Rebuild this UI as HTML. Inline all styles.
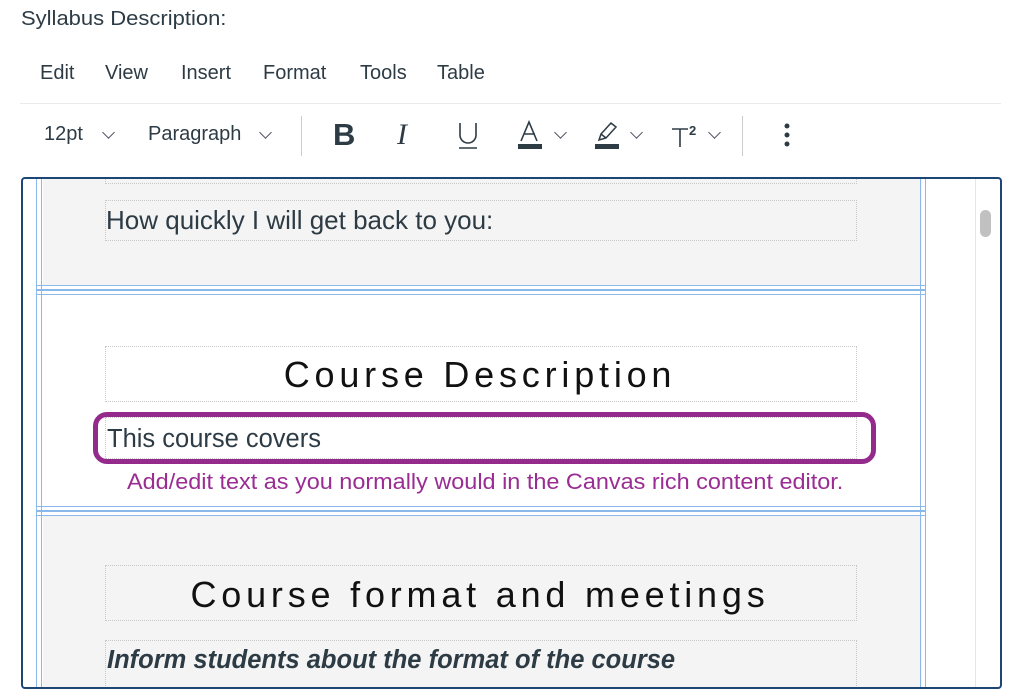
<!DOCTYPE html>
<html><head><meta charset="utf-8"><style>
body{margin:0;width:1024px;height:700px;background:#fff;position:relative;overflow:hidden;font-family:"Liberation Sans",sans-serif;color:#2d3b45}
.a{position:absolute}
.menu{top:62px;font-size:20px}
.t{top:123px;font-size:20px}
.chev{position:absolute;width:8px;height:8px;border-right:1.3px solid #556;border-bottom:1.3px solid #556;transform:rotate(45deg)}
.bl{position:absolute;background:#8bb8ea}
.dot{position:absolute;border:1px dotted #c8c8c8}
.sx{transform-origin:left center;white-space:nowrap}
</style></head><body>
<div class="a sx" style="left:21px;top:8px;font-size:20px;transform:scaleX(1.1)">Syllabus Description:</div>
<div class="a menu" style="left:40px">Edit</div>
<div class="a menu" style="left:105px">View</div>
<div class="a menu" style="left:181px">Insert</div>
<div class="a menu" style="left:263px">Format</div>
<div class="a menu" style="left:360px">Tools</div>
<div class="a menu" style="left:437px">Table</div>
<div class="a" style="left:20px;top:103px;width:981px;height:1px;background:#eaeaea"></div>

<div class="a t" style="left:44px">12pt</div><div class="chev" style="left:104px;top:128px"></div>
<div class="a t" style="left:148px">Paragraph</div><div class="chev" style="left:261px;top:128px"></div>
<div class="a" style="left:301px;top:116px;width:1px;height:40px;background:#ccc"></div>
<div class="a" style="left:333px;top:117px;font-size:31px;font-weight:bold">B</div>
<div class="a" style="left:397px;top:118px;font-size:30px;font-style:italic;font-family:'Liberation Serif',serif">I</div>
<svg class="a" style="left:456px;top:121px" width="24" height="30"><path d="M4 2v12a8 8 0 0 0 16 0V2" fill="none" stroke="#2d3b45" stroke-width="1.6"/><path d="M3 27h18" stroke="#2d3b45" stroke-width="1.6"/></svg>
<svg class="a" style="left:516px;top:120px" width="28" height="30"><path d="M5 21L13 2l8 19M8 14h11" fill="none" stroke="#2d3b45" stroke-width="1.6"/><rect x="2" y="24" width="24" height="5" fill="#2d3b45"/></svg>
<div class="chev" style="left:556px;top:128px"></div>
<svg class="a" style="left:593px;top:120px" width="28" height="30"><path d="M6 20l2-6 10-11 5 4-10 11z M8 14l5 4" fill="none" stroke="#2d3b45" stroke-width="1.5"/><rect x="2" y="24" width="24" height="5" fill="#2d3b45"/></svg>
<div class="chev" style="left:632px;top:128px"></div>
<svg class="a" style="left:670px;top:120px" width="30" height="30"><path d="M2 9h16M10 9v18" stroke="#2d3b45" stroke-width="1.6"/><text x="19" y="15" font-size="13" font-weight="bold" fill="#2d3b45" font-family="Liberation Sans">2</text></svg>
<div class="chev" style="left:710px;top:128px"></div>
<div class="a" style="left:742px;top:116px;width:1px;height:40px;background:#ccc"></div>
<svg class="a" style="left:783px;top:122px" width="8" height="26"><circle cx="4" cy="4" r="2.5" fill="#2d3b45"/><circle cx="4" cy="13" r="2.5" fill="#2d3b45"/><circle cx="4" cy="22" r="2.5" fill="#2d3b45"/></svg>

<!-- editor -->
<div class="a" style="left:21px;top:177px;width:977px;height:508px;border:2px solid #1d4677;border-radius:4px;overflow:hidden;background:#fff">
 <div class="a" style="left:20px;top:0;width:879px;height:107px;background:#f4f4f4"></div>
 <div class="a" style="left:20px;top:337px;width:879px;height:175px;background:#f4f4f4"></div>
 <div class="bl" style="left:13px;top:0;width:1px;height:520px"></div>
 <div class="bl" style="left:18px;top:0;width:1px;height:520px"></div>
 <div class="bl" style="left:897px;top:0;width:1px;height:520px"></div>
 <div class="bl" style="left:902px;top:0;width:1px;height:520px"></div>
 <div class="bl" style="left:13px;top:106px;width:890px;height:1px"></div>
 <div class="bl" style="left:13px;top:110px;width:890px;height:2px"></div>
 <div class="bl" style="left:13px;top:115px;width:890px;height:1px"></div>
 <div class="bl" style="left:13px;top:327px;width:890px;height:1px"></div>
 <div class="bl" style="left:13px;top:331px;width:890px;height:2px"></div>
 <div class="bl" style="left:13px;top:336px;width:890px;height:1px"></div>
 <div class="a" style="left:952px;top:0;width:1px;height:520px;background:#e6e6e6"></div>
 <div class="a" style="left:957px;top:31px;width:11px;height:27px;border-radius:6px;background:#c1c1c1"></div>
 <div class="dot" style="left:82px;top:-30px;width:750px;height:33px"></div>
 <div class="dot" style="left:82px;top:21px;width:750px;height:39px"></div>
 <div class="a" style="left:83px;top:26px;font-size:26px;color:#2d3b45">How quickly I will get back to you:</div>
 <div class="dot" style="left:82px;top:167px;width:750px;height:54px"></div>
 <div class="a" style="left:82px;top:175px;width:750px;text-align:center;font-size:36px;letter-spacing:4.8px;color:#111">Course Description</div>
 <div class="dot" style="left:82px;top:238px;width:750px;height:40px"></div>
 <div class="a" style="left:70px;top:233px;width:773px;height:42px;border:5px solid #932a8c;border-radius:14px"></div>
 <div class="a" style="left:84px;top:246px;font-size:25.5px;color:#2d3b45">This course covers</div>
 <div class="a sx" style="left:104px;top:290px;font-size:22px;color:#9a2c94;transform:scaleX(1.065)">Add/edit text as you normally would in the Canvas rich content editor.</div>
 <div class="dot" style="left:82px;top:386px;width:750px;height:54px"></div>
 <div class="a" style="left:82px;top:395px;width:750px;text-align:center;font-size:36px;letter-spacing:4.8px;color:#111">Course format and meetings</div>
 <div class="dot" style="left:82px;top:461px;width:750px;height:60px"></div>
 <div class="a" style="left:84px;top:467px;font-size:25.5px;font-weight:bold;font-style:italic;color:#2d3b45">Inform students about the format of the course</div>
</div>
</body></html>
